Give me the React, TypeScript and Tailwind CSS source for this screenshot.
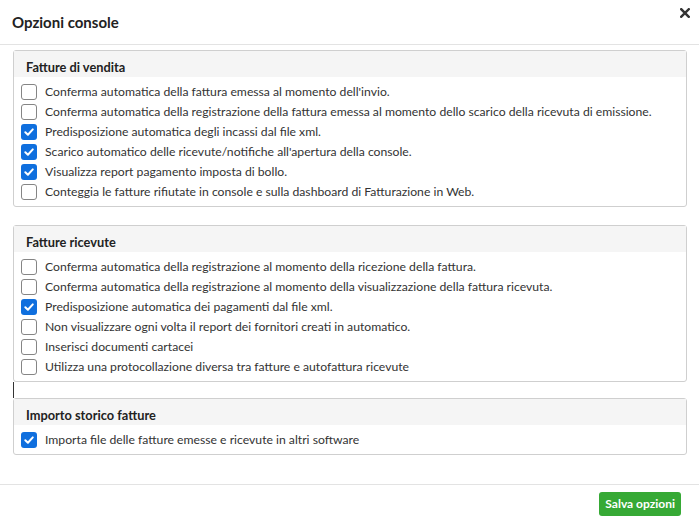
import React from "react";

type Opt = { label: string; checked: boolean };

const vendita: Opt[] = [
  { label: "Conferma automatica della fattura emessa al momento dell'invio.", checked: false },
  { label: "Conferma automatica della registrazione della fattura emessa al momento dello scarico della ricevuta di emissione.", checked: false },
  { label: "Predisposizione automatica degli incassi dal file xml.", checked: true },
  { label: "Scarico automatico delle ricevute/notifiche all'apertura della console.", checked: true },
  { label: "Visualizza report pagamento imposta di bollo.", checked: true },
  { label: "Conteggia le fatture rifiutate in console e sulla dashboard di Fatturazione in Web.", checked: false },
];

const ricevute: Opt[] = [
  { label: "Conferma automatica della registrazione al momento della ricezione della fattura.", checked: false },
  { label: "Conferma automatica della registrazione al momento della visualizzazione della fattura ricevuta.", checked: false },
  { label: "Predisposizione automatica dei pagamenti dal file xml.", checked: true },
  { label: "Non visualizzare ogni volta il report dei fornitori creati in automatico.", checked: false },
  { label: "Inserisci documenti cartacei", checked: false },
  { label: "Utilizza una protocollazione diversa tra fatture e autofattura ricevute", checked: false },
];

const storico: Opt[] = [
  { label: "Importa file delle fatture emesse e ricevute in altri software", checked: true },
];

function Check({ checked }: { checked: boolean }) {
  if (checked) {
    return (
      <span className="w-4 h-4 rounded-[3px] bg-[#0f6fde] flex items-center justify-center shrink-0">
        <svg width="12" height="12" viewBox="0 0 12 12" fill="none">
          <path d="M2.3 6.2 L4.9 8.7 L9.8 3.4" stroke="white" strokeWidth="2" strokeLinecap="round" strokeLinejoin="round" />
        </svg>
      </span>
    );
  }
  return <span className="w-4 h-4 rounded-[3px] border border-[#858585] bg-white shrink-0" />;
}

function Panel({ title, items }: { title: string; items: Opt[] }) {
  return (
    <div className="border border-[#cfcfcf] rounded-[3px] bg-white">
      <div className="bg-[#f5f5f5] h-[26px] pt-[8px] pl-[12px] text-[12.8px] leading-[16px] font-bold text-[#222]">
        {title}
      </div>
      <div className="pt-[5px] pb-[4px] pl-[7px]">
        {items.map((o, i) => (
          <div key={i} className="h-[20px] flex items-center gap-[8px]">
            <Check checked={o.checked} />
            <span className="text-[12.2px] text-[#333] whitespace-nowrap">{o.label}</span>
          </div>
        ))}
      </div>
    </div>
  );
}

export default function App() {
  return (
    <div className="w-[699px] h-[523px] bg-white flex flex-col" style={{ fontFamily: 'Lato, "Noto Sans", sans-serif' }}>
      <div className="h-[45px] border-b border-[#e3e3e3] flex items-start justify-between pl-[12px] pr-[9px] shrink-0">
        <div className="text-[15px] font-bold text-[#222] leading-[20px] mt-[12px]">Opzioni console</div>
        <svg className="mt-[8px]" width="10" height="10" viewBox="0 0 10 10">
          <path d="M1.2 1.2 L8.8 8.8 M8.8 1.2 L1.2 8.8" stroke="#333" strokeWidth="2.4" strokeLinecap="square" />
        </svg>
      </div>
      <div className="pl-[13px] pr-[12px] pt-[5px] flex-1">
        <Panel title="Fatture di vendita" items={vendita} />
        <div className="h-[18px]" />
        <Panel title="Fatture ricevute" items={ricevute} />
        <div className="h-[16px] border-l border-[#333]" />
        <Panel title="Importo storico fatture" items={storico} />
      </div>
      <div className="h-[39px] border-t border-[#e3e3e3] flex justify-end items-start pr-[18px] pt-[7px] shrink-0">
        <button className="h-[24px] px-[6px] rounded-[3px] bg-[#36a935] text-white text-[12px] font-bold leading-[24px]">
          Salva opzioni
        </button>
      </div>
    </div>
  );
}
